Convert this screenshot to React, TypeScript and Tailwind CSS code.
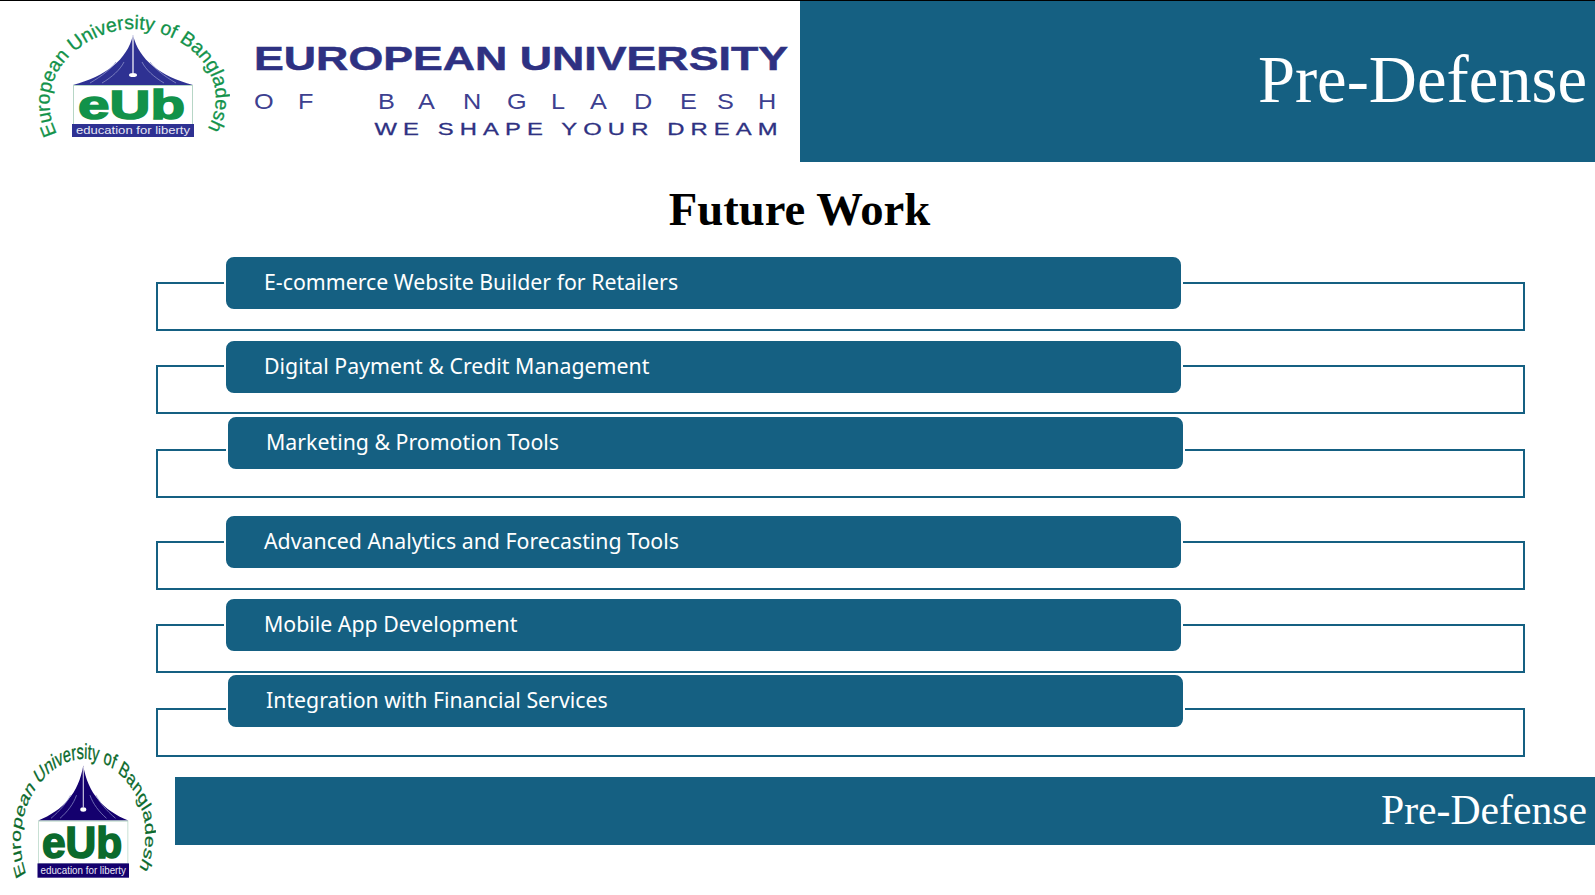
const rows = [
  { label: 'E-commerce Website Builder for Retailers', row: 'mt-0', pill: 'ml-[68px] -mb-[29px]' },
  { label: 'Digital Payment & Credit Management', row: 'mt-[8px]', pill: 'ml-[68px] -mb-[30px]' },
  { label: 'Marketing & Promotion Tools', row: 'mt-[1px]', pill: 'ml-[70px] -mb-[22px]' },
  { label: 'Advanced Analytics and Forecasting Tools', row: 'mt-[16px]', pill: 'ml-[68px] -mb-[29px]' },
  { label: 'Mobile App Development', row: 'mt-[7px]', pill: 'ml-[68px] -mb-[29px]' },
  { label: 'Integration with Financial Services', row: 'mt-0', pill: 'ml-[70px] -mb-[21px]' },
]

// drawn in the header's page pixels, the footer copy squeezes it with preserveAspectRatio
function Logo({ id, navy, green }: { id: string; navy: string; green: string }) {
  return (
    <svg viewBox="30 10 200 130" preserveAspectRatio="none" className="h-full w-full">
      <defs>
        <path id={id} d="M 57 134 C 29 76 85 29 133 29 C 186 29 238 78 206 132" fill="none" />
      </defs>
      <text fill={green} stroke={green} strokeWidth="0.3" fontFamily="Liberation Sans, sans-serif" fontSize="19.5">
        <textPath href={`#${id}`}>European University of Bangladesh</textPath>
      </text>
      <path d="M133 35 C 139 60 160 76 193 85 L 73 85 C 106 76 127 60 133 35 Z" fill={navy} />
      <path d="M132.4 36 h1.2 v37 h-1.2 Z" fill="#fff" />
      <ellipse cx="133" cy="75" rx="4" ry="2" fill="#fff" />
      <path d="M124 62 C 120 70 112 77 102 83 M116 62 C 112 68 102 76 90 83 M142 62 C 146 70 154 77 164 83 M150 62 C 154 68 164 76 176 83" fill="none" stroke="#8c90c8" strokeWidth="0.8" />
      <rect x="73.5" y="85.5" width="119" height="39" fill="none" stroke="#b7d6c6" strokeWidth="1" />
      <text x="78" y="119" fill={green} stroke={green} strokeWidth="1.5" fontFamily="Liberation Sans, sans-serif" fontWeight="700" fontSize="40" textLength="107" lengthAdjust="spacingAndGlyphs">eUb</text>
      <rect x="72" y="124" width="122" height="13" fill={navy} />
      <text x="76" y="134" fill="#e8e8f4" fontFamily="Liberation Sans, sans-serif" fontSize="10.5" textLength="114" lengthAdjust="spacingAndGlyphs">education for liberty</text>
    </svg>
  )
}

const bangladeshX = [0, 44, 124, 164, 209, 253, 297, 336, 380, 426, 463, 504].map((x) => x / 1.15).join(' ')

function Wordmark() {
  return (
    <svg viewBox="0 0 540 100" className="h-[100px] w-[540px] shrink-0">
      <text x="0" y="30" fill="#2e3182" stroke="#2e3182" strokeWidth="0.5" fontFamily="Liberation Sans, sans-serif" fontWeight="700" fontSize="33.5" textLength="534" lengthAdjust="spacingAndGlyphs">EUROPEAN UNIVERSITY</text>
      <g transform="scale(1.15 1)">
        <text x={bangladeshX} y="69" fill="#3d4090" fontFamily="Liberation Sans, sans-serif" fontSize="22">OFBANGLADESH</text>
      </g>
      <g transform="scale(1.4 1)">
        <text x="86" y="95" fill="#2e3182" stroke="#2e3182" strokeWidth="0.3" fontFamily="Liberation Sans, sans-serif" fontSize="17" textLength="288">WE SHAPE YOUR DREAM</text>
      </g>
    </svg>
  )
}

export default function App() {
  return (
    <div className="h-[895px] w-[1595px] overflow-hidden bg-white">
      {/* Header */}
      <header className="flex h-[162px] border-t border-black">
        <div className="flex w-[800px] items-start">
          <div className="mt-[9px] ml-[30px] h-[130px] w-[200px] shrink-0">
            <Logo id="arc-header" navy="#2e3192" green="#12924a" />
          </div>
          <div className="mt-[39px] ml-[24px]">
            <Wordmark />
          </div>
        </div>
        <div className="flex flex-1 items-center justify-end bg-[#156082] pr-[8px] pb-[2px]">
          <span className="font-['Liberation_Serif',serif] text-[66.6px] leading-none text-white">Pre-Defense</span>
        </div>
      </header>

      <h1 className="flex h-[93px] items-center justify-center pt-[2px] pl-[4px] font-['Liberation_Serif',serif] text-[46.7px] font-bold text-black">
        Future Work
      </h1>

      {/* Work items */}
      <main className="ml-[156px] w-[1369px]">
        {rows.map((item) => (
          <div key={item.label} className={item.row}>
            <div className={`relative z-10 flex h-[56px] w-[959px] items-center rounded-[10px] border-2 border-white bg-[#156082] pb-[2px] pl-[38px] font-['Noto_Sans',sans-serif] text-[21.3px] text-white ${item.pill}`}>
              {item.label}
            </div>
            <div className="h-[49px] border-2 border-[#156082]" />
          </div>
        ))}
      </main>

      {/* Footer */}
      <footer className="-mt-[21px] flex items-start">
        <div className="ml-[6px] mt-[2px] h-[143px] w-[150px] shrink-0">
          <Logo id="arc-footer" navy="#14006e" green="#0b6a2c" />
        </div>
        <div className="ml-[19px] mt-[41px] flex h-[68px] flex-1 items-center justify-end bg-[#156082] pr-[8px]">
          <span className="font-['Liberation_Serif',serif] text-[41.7px] leading-none text-white">Pre-Defense</span>
        </div>
      </footer>
    </div>
  )
}
